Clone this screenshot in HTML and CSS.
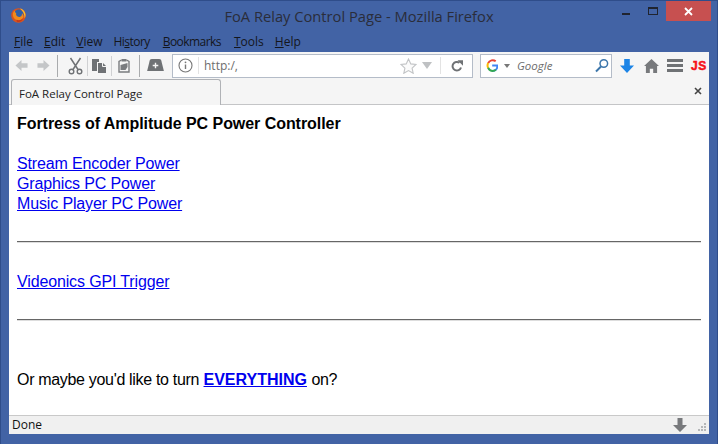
FILE: index.html
```html
<!DOCTYPE html>
<html lang="en">
<head>
<meta charset="utf-8">
<title>FoA Relay Control Page - Mozilla Firefox</title>
<link rel="stylesheet" href="styles.css">
</head>
<body>
<div class="window">
  <header class="titlebar">
    <svg class="fxlogo" width="15" height="15" viewBox="0 0 15 15"><circle cx="7.500" cy="7.500" r="7.300" fill="#d9541e"/><circle cx="7.800" cy="6.400" r="4.800" fill="#2f5fa8"/><path d="M3.500 2.500C2 4 1.500 6 2 8c.8 3 3.500 4.800 6 4.600 2.600-.2 4.400-2 4.400-4.400 0-1.200-.7-2.400-1.500-3 .3 1.500-.3 3-1.700 3.500-1.300.5-3 0-3.700-1.100-.6-1-.3-1.700-.2-2.100C4.800 5 4 4 3.500 2.500z" fill="#ef8a1d"/><path d="M9 .4c3 .6 5.500 3.300 5.500 6.600 0 1.200-.3 2.300-.8 3.300.1-3.900-1.700-7.600-4.700-9.900z" fill="#fbc02d"/><path d="M5.500 11.800c2.500 1 5.400.2 6.800-2-.6 2.600-2.800 4.300-5 4.300-1 0-2-.5-1.800-2.300z" fill="#c53a1a"/></svg>
    <div class="title">FoA Relay Control Page - Mozilla Firefox</div>
    <div class="winbtns">
      <span class="wb wb-min"><i class="min-glyph"></i></span>
      <span class="wb wb-max"><i class="max-glyph"></i></span>
      <span class="wb wb-close"><svg width="11" height="11" viewBox="0 0 11 11"><path d="M2 2l7 7M9 2l-7 7" stroke="#fff" stroke-width="1.800" fill="none"/></svg></span>
    </div>
  </header>
  <nav class="menubar">
    <span class="m"><u>F</u>ile</span><span class="m"><u>E</u>dit</span><span class="m"><u>V</u>iew</span><span class="m m-tight">Hi<u>s</u>tory</span><span class="m m-tight"><u>B</u>ookmarks</span><span class="m"><u>T</u>ools</span><span class="m"><u>H</u>elp</span>
  </nav>
  <div class="browser">
    <div class="toolbar">
      <svg class="ic nav-back" width="13" height="13" viewBox="0 0 14 14"><path d="M7 1L.5 7 7 13V9.500h6.500v-5H7z" fill="#c4c6c8"/></svg>
      <svg class="ic nav-fwd" width="13" height="13" viewBox="0 0 14 14"><path d="M7 1l6.500 6L7 13V9.500H.5v-5H7z" fill="#c4c6c8"/></svg>
      <span class="sep sep-a"></span>
      <svg class="ic cut" width="15" height="18" viewBox="0 0 15 18"><path d="M2.500 1l7.500 11.500M12.500 1L5 12.500" stroke="#6f7275" stroke-width="1.500" fill="none"/><circle cx="3.500" cy="14.500" r="2.300" fill="none" stroke="#6f7275" stroke-width="1.400"/><circle cx="11.500" cy="14.500" r="2.300" fill="none" stroke="#6f7275" stroke-width="1.400"/></svg>
      <span class="sep sep-b"></span>
      <svg class="ic copy" width="15" height="16" viewBox="0 0 15 16"><path d="M0 1h7v3H5v9H0z" fill="#6f7275"/><path d="M6 5h5l3 3v7H6z" fill="#6f7275"/><path d="M10.500 5v3.500H14" stroke="#f5f5f5" fill="none"/></svg>
      <span class="sep sep-c"></span>
      <svg class="ic paste" width="12" height="15" viewBox="0 0 12 15"><path d="M3.500 2L1 3.500v10.500h10V3.500L8.500 2" fill="none" stroke="#7a7c7f" stroke-width="1.400"/><path d="M3.500 3V1h5v2.500h-5z" fill="#7a7c7f"/><path d="M2.500 7l7-2v4l-2 3h-5z" fill="#7a7c7f"/></svg>
      <span class="sep sep-d"></span>
      <svg class="ic bm" width="17" height="13" viewBox="0 0 18 14"><path d="M5 0h8c1.500 0 2 .8 2.300 2L18 13H0L2.700 2C3 .8 3.500 0 5 0z" fill="#6f7275"/><path d="M6 7h6M9 4v6" stroke="#f5f5f5" stroke-width="1.500"/></svg>
      <div class="urlbar">
        <svg class="info" width="15" height="15" viewBox="0 0 15 15"><circle cx="7.500" cy="7.500" r="6.500" fill="none" stroke="#777" stroke-width="1.100"/><path d="M7.500 6.500v4.500" stroke="#777" stroke-width="1.400"/><circle cx="7.500" cy="4.300" r=".9" fill="#777"/></svg>
        <span class="urlsep"></span>
        <span class="urltext">http:/,</span>
        <svg class="star" width="17" height="16" viewBox="0 0 17 16"><path d="M8.500 1l2.300 4.900 5.200.6-3.900 3.600 1.100 5.200-4.700-2.700-4.700 2.700 1.100-5.200L1 6.500l5.200-.6z" fill="#fbfbfb" stroke="#c2c4c6" stroke-width="1.100"/></svg>
        <svg class="drop" width="10" height="7" viewBox="0 0 10 7"><path d="M0 0h10L5 7z" fill="#bfc1c3"/></svg>
        <span class="urlsep2"></span>
        <svg class="reload" width="12" height="12" viewBox="0 0 12 12"><path d="M10 7.500A4.300 4.300 0 1 1 8.500 2.800" fill="none" stroke="#6f7275" stroke-width="2"/><path d="M6.500.3H12v5.500z" fill="#6f7275"/></svg>
      </div>
      <div class="searchbar">
        <svg class="glogo" width="12" height="13" viewBox="0 0 12 13"><path d="M6.200 6.500h5.300c0 3.500-2.300 5.500-5.300 5.500" fill="none" stroke="#4285f4" stroke-width="2"/><path d="M2.200 4.200C3.500 1.200 7.200.3 9.700 2.300" fill="none" stroke="#ea4335" stroke-width="2"/><path d="M2.200 4C1.300 5.800 1.300 7.400 2.200 9" fill="none" stroke="#fbbc05" stroke-width="2"/><path d="M2.100 8.800C3.200 11 4.800 12 6.500 12c1.400 0 2.500-.4 3.300-1.200" fill="none" stroke="#34a853" stroke-width="2"/></svg>
        <svg class="gdrop" width="6" height="4" viewBox="0 0 6 4"><path d="M0 0h6L3 4z" fill="#777"/></svg>
        <span class="stext">Google</span>
        <svg class="mag" width="14" height="15" viewBox="0 0 14 15"><circle cx="8.800" cy="5.500" r="3.800" fill="none" stroke="#3c76ab" stroke-width="1.500"/><path d="M6 8.500L1 13.500" stroke="#3c76ab" stroke-width="2"/></svg>
      </div>
      <svg class="ic dl" width="14" height="14" viewBox="0 0 15 15"><path d="M4.500 0h6v7h4.500L7.500 15 0 7h4.500z" fill="#1c84e6"/></svg>
      <svg class="ic home" width="15" height="14" viewBox="0 0 16 15"><path d="M8 0l8 7.500h-2V15H9.800v-4.500H6.200V15H2V7.500H0z" fill="#77797c"/></svg>
      <svg class="ic burger" width="16" height="13" viewBox="0 0 16 13"><path d="M0 0h16v3H0zM0 5h16v3H0zM0 10h16v3H0z" fill="#6f7275"/></svg>
      <span class="js">JS</span>
    </div>
    <div class="tabrow">
      <div class="tab">FoA Relay Control Page</div>
      <svg class="tabclose" width="8" height="8" viewBox="0 0 8 8"><path d="M1 1l6 6M7 1L1 7" stroke="#444" stroke-width="1.600"/></svg>
    </div>
    <main class="page">
      <p class="heading">Fortress of Amplitude PC Power Controller</p>
      <div class="links">
        <a href="#">Stream Encoder Power</a>
        <a href="#">Graphics PC Power</a>
        <a href="#">Music Player PC Power</a>
      </div>
      <hr class="rule rule-a">
      <div class="links links-b"><a href="#">Videonics GPI Trigger</a></div>
      <hr class="rule rule-b">
      <p class="outro"><span class="tight">Or maybe you'd like to turn</span> <a href="#"><b>EVERYTHING</b></a> <span class="tight">on?</span></p>
    </main>
    <footer class="status">
      <span class="done">Done</span>
      <svg class="sdl" width="14" height="14" viewBox="0 0 14 14"><path d="M4.500 0h5v7H14L7 14 0 7h4.500z" fill="#77797c"/></svg>
      <svg class="grip" width="9" height="9" viewBox="0 0 9 9"><path d="M6 0h2v2H6zM3 3h2v2H3zM6 3h2v2H6zM0 6h2v2H0zM3 6h2v2H3zM6 6h2v2H6z" fill="#b4b6b8"/></svg>
    </footer>
  </div>
</div>
</body>
</html>
```

FILE: styles.css
```css
html, body { margin: 0; padding: 0; }
body { width: 718px; height: 444px; overflow: hidden; background: #4263a5; }
.window {
  height: 444px; box-sizing: border-box;
  background: #4263a5; border: 1px solid #2f4d8a; border-bottom: 0;
  padding: 0 8px 10px; display: flex; flex-direction: column;
}
.titlebar { height: 30px; display: flex; align-items: center; position: relative; flex: none; }
.fxlogo { margin: 0 0 2px 2px; }
.title {
  position: absolute; left: 0; right: 0; top: 6px; text-align: center;
  font: 14.700px/18px "Open Sans", sans-serif; color: #2a2d3a;
}
.winbtns { position: absolute; top: 0; right: -2px; display: flex; }
.wb { display: flex; align-items: center; justify-content: center; height: 20px; }
.wb-min { width: 42px; }
.wb-max { width: 12px; }
.wb-close { width: 45px; background: #c75050; margin-left: 7px; }
.min-glyph { display: block; width: 8px; height: 2px; background: #20242f; margin-top: 6px; }
.max-glyph { display: block; flex: none; width: 8px; height: 3px; border: 1px solid #20242f; border-top-width: 2px; padding: 1px 0; }
.menubar {
  height: 21px; display: flex; flex: none; align-items: center; padding-left: 5px;
  font: 12px/16px "Open Sans", sans-serif; color: #14161c; gap: 11px;
}
.m-tight { letter-spacing: -0.55px; margin-right: 2px; }
.browser { flex: 1; display: flex; flex-direction: column; background: #f5f5f5; min-height: 0; }
.toolbar {
  height: 27px; flex: none; display: flex; align-items: center;
  box-sizing: border-box; position: relative;
}
.ic { flex: none; }
.nav-back { margin-left: 6px; }
.nav-fwd { margin-left: 9px; }
.sep { flex: none; width: 1px; background: #a9abad; height: 22px; }
.sep-a { margin-left: 7px; }
.cut { margin-left: 10px; }
.sep-b { margin-left: 4px; height: 20px; background: #d0d1d3; }
.copy { margin-left: 4px; }
.sep-c { margin-left: 4px; height: 20px; background: #d0d1d3; }
.paste { margin-left: 6px; }
.sep-d { margin-left: 9px; }
.bm { margin-left: 7px; }
.urlbar {
  margin-left: 8px; width: 301px; height: 24px; box-sizing: border-box; flex: none;
  background: #fff; border: 1px solid #b4bcc8; display: flex; align-items: center;
}
.info { margin-left: 5px; flex: none; }
.urlsep { width: 1px; height: 17px; background: #e3e3e3; margin-left: 5px; }
.urltext { margin-left: 5px; font: 12px/16px "Open Sans", sans-serif; color: #6d6d6d; flex: 1; }
.star { flex: none; }
.drop { margin-left: 5px; flex: none; }
.urlsep2 { width: 1px; height: 17px; background: #e3e3e3; margin-left: 8px; }
.reload { margin: 0 9px 0 10px; flex: none; }
.searchbar {
  margin-left: 7px; width: 132px; height: 24px; box-sizing: border-box; flex: none;
  background: #fff; border: 1px solid #b4bcc8; display: flex; align-items: center;
}
.glogo { margin-left: 5px; flex: none; }
.gdrop { margin-left: 6px; flex: none; }
.stext { margin-left: 7px; flex: 1; font: italic 11.500px/16px "Open Sans", sans-serif; color: #6d6d6d; }
.mag { margin-right: 2px; flex: none; }
.dl { margin-left: 8px; }
.home { margin-left: 10px; }
.burger { margin-left: 8px; }
.js { margin-left: 8px; font: 900 12px/14px "Liberation Sans", sans-serif; color: #f5111a; letter-spacing: 0.5px; -webkit-text-stroke: 0.5px #f5111a; }
.tabrow {
  height: 25px; flex: none; display: flex; align-items: flex-end; justify-content: space-between;
  border-bottom: 1px solid #c4c5c7; position: relative;
}
.tab {
  margin-left: 2px; width: 210px; height: 26px; box-sizing: border-box;
  margin-bottom: -1px; background: #f5f5f5; border: 1px solid #b0b2b6; border-bottom: 0; border-radius: 3px 3px 0 0;
  padding-left: 7px; font: 11.500px/27px "Open Sans", sans-serif; color: #222;
}
.tabclose { margin: 0 7px 9px 0; }
.page {
  flex: 1; background: #fff; padding: 9px 8px 0; min-height: 0;
  font: 16px/20px "Liberation Sans", sans-serif; color: #000; overflow: hidden;
}
.heading { margin: 0; font-weight: bold; letter-spacing: -0.05px; }
.links { margin-top: 20px; display: flex; flex-direction: column; align-items: flex-start; letter-spacing: -0.14px; }
.links a, .outro a { color: #0000ee; }
.tight { letter-spacing: -0.32px; }
.rule { margin: 0; border: 0; border-top: 1px solid #666; border-bottom: 1px solid #ddd; }
.rule-a { margin-top: 27px; }
.links-b { margin-top: 29px; }
.rule-b { margin-top: 27px; }
.outro { margin: 49px 0 0; }
.status {
  height: 19px; flex: none; display: flex; align-items: center; box-sizing: border-box;
  background: #f0f0f0; border-top: 1px solid #c9c9c9; padding-left: 3px;
}
.done { flex: 1; font: 12px/16px "Open Sans", sans-serif; color: #111; }
.sdl { margin-right: 11px; }
.grip { margin-right: 2px; margin-top: 4px; }
```
